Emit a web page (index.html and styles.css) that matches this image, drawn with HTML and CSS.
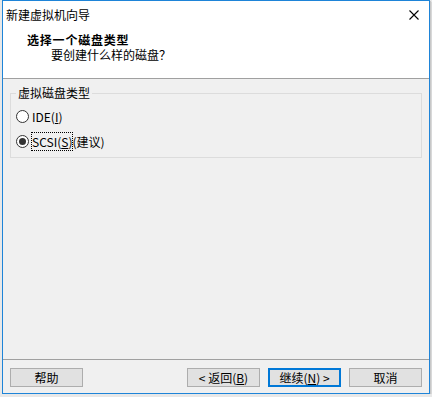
FILE: index.html
```html
<!DOCTYPE html>
<html lang="zh-CN">
<head>
    <meta charset="UTF-8">
    <meta name="viewport" content="width=device-width, initial-scale=1.0">
    <title>新建虚拟机向导</title>
    <link rel="stylesheet" href="styles.css">
</head>
<body>
    <div class="window">
        <div class="header">
            <div class="titlebar">
                <span class="title">新建虚拟机向导</span>
                <svg class="close" width="10" height="10" viewBox="0 0 10 10">
                    <path d="M0.5 0.5 L9.5 9.5 M9.5 0.5 L0.5 9.5" stroke="#000" stroke-width="1.1" fill="none"/>
                </svg>
            </div>
            <div class="heading">
                <div class="heading-main">选择一个磁盘类型</div>
                <div class="heading-sub">要创建什么样的磁盘？</div>
            </div>
        </div>
        <div class="content">
            <fieldset class="group">
                <legend>虚拟磁盘类型</legend>
                <div class="radio">
                    <span class="circle"></span>
                    <span class="label">IDE(<u>I</u>)</span>
                </div>
                <div class="radio checked">
                    <span class="circle"></span>
                    <span class="label"><span class="focus">SCSI(<u>S</u>)</span>(建议)</span>
                </div>
            </fieldset>
        </div>
        <div class="footer">
            <button class="btn">帮助</button>
            <span class="spacer"></span>
            <button class="btn">&lt; 返回(<u>B</u>)</button>
            <button class="btn default">继续(<u>N</u>) &gt;</button>
            <button class="btn">取消</button>
        </div>
    </div>
</body>
</html>
```

FILE: styles.css
```css
body { margin: 0; padding: 0 0 0 2px; background: #e8e8e8; font-family: "Noto Sans CJK SC", "Liberation Sans", sans-serif; font-size: 12px; color: #000; }
.window { width: 426px; height: 392px; border: 1px solid #1e84d8; background: #f0f0f0; display: flex; flex-direction: column; box-shadow: 1px 1px 0 #c8c8c8, 2px 2px 0 #d8d8d8; }
.header { height: 77px; background: #fff; border-bottom: 1px solid #a0a0a0; }
.titlebar { height: 27px; display: flex; align-items: center; justify-content: space-between; padding-left: 3px; }
.title { line-height: 16px; }
.close { margin-right: 10px; }
.heading { padding: 4px 0 0 24px; line-height: 15px; }
.heading-main { font-weight: 700; letter-spacing: 0.8px; }
.heading-sub { padding-left: 24px; }
.content { height: 280px; border-bottom: 1px solid #a0a0a0; }
.group { margin: 6px 7px 0 7px; padding: 3px 5px 3px 5px; border: 1px solid #dcdcdc; min-width: 0; }
.group legend { padding: 0 2px; margin-left: 0; line-height: 16px; }
.radio { height: 25px; display: flex; align-items: center; gap: 3px; }
.circle { width: 11px; height: 11px; border: 1px solid #333; border-radius: 50%; background: #fff; position: relative; }
.radio.checked .circle::after { content: ""; position: absolute; left: 2px; top: 2px; width: 7px; height: 7px; border-radius: 50%; background: #333; }
.label { line-height: 14px; }
.focus { outline: 1px dotted #000; }
u { text-decoration: underline; text-underline-offset: 1px; }
.footer { flex: 1; display: flex; align-items: flex-start; gap: 8px; padding: 8px 7px 0 7px; }
.spacer { flex: 1; }
.btn { width: 73px; height: 19px; margin: 0; padding: 0; border: 1px solid #adadad; background: #e1e1e1; font: inherit; color: #000; line-height: 15px; }
.btn.default { border: 2px solid #0078d7; }
```
